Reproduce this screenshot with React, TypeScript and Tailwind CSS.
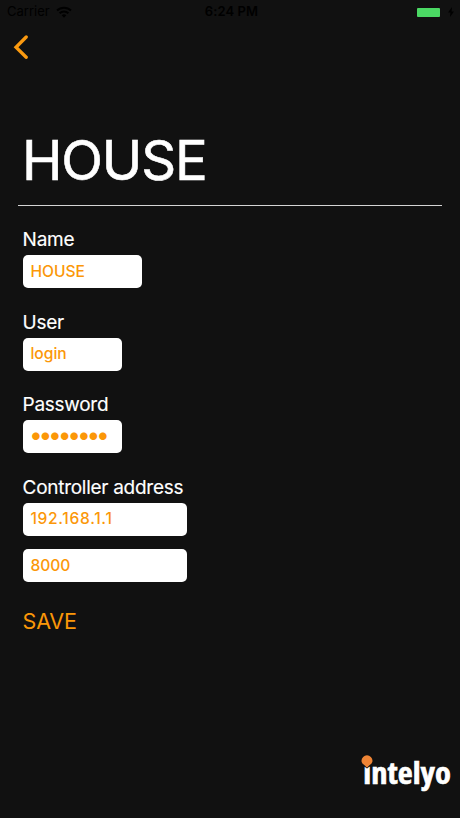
type FieldProps = {
  id: string;
  value: string;
  className: string;
  type?: string;
  label?: string;
};

function Field({ id, value, className, type = "text", label }: FieldProps) {
  return (
    <input
      id={id}
      type={type}
      aria-label={label}
      defaultValue={value}
      className={`block h-[33px] rounded-[5px] bg-white pl-[7.8px] pr-1 font-[550] text-[#fb9708] outline-none ${className}`}
    />
  );
}

function Label({ htmlFor, children }: { htmlFor: string; children: string }) {
  return (
    <label
      htmlFor={htmlFor}
      className="block h-[30px] text-[19px] leading-[30.4px] tracking-[-0.28px] text-white [-webkit-text-stroke:0.15px_white]"
    >
      {children}
    </label>
  );
}

function StatusBar() {
  return (
    <div className="flex h-6 items-center justify-between pl-[7px] pr-1.5 text-[13px] text-black">
      <div className="flex w-[100px] items-center gap-1.5">
        <span>Carrier</span>
        <svg width="16" height="12" viewBox="0 0 16 12" fill="none" stroke="currentColor" strokeWidth="2">
          <path d="M1 4.5a10 10 0 0 1 14 0" />
          <path d="M3.6 7.2a6.3 6.3 0 0 1 8.8 0" />
          <path d="M8 11.8 5.7 9.3a3.3 3.3 0 0 1 4.6 0Z" fill="currentColor" stroke="none" />
        </svg>
      </div>
      <span className="pl-0.5 font-semibold tracking-[0.1px]">6:24 PM</span>
      <div className="flex w-[100px] items-center justify-end gap-2">
        <span className="h-[9px] w-[23px] rounded-[1px] bg-[#4bd964]" />
        <svg width="6" height="10" viewBox="0 0 6 10" fill="currentColor">
          <path d="M4 0 0 5.6h2.4L2 10l4-5.6H3.6Z" />
        </svg>
      </div>
    </div>
  );
}

function Logo() {
  return (
    <svg width="94" height="50" viewBox="0 -4 94 50" className="block overflow-visible">
      <text
        x="2.3"
        y="31"
        textLength="87.6"
        lengthAdjust="spacingAndGlyphs"
        fill="#fff"
        stroke="#fff"
        strokeWidth="0.6"
        fontSize="30"
        fontWeight="700"
        className="font-['Open_Sans',sans-serif] font-stretch-condensed"
      >
        intelyo
      </text>
      <path
        d="M6 2.3a5.5 5.5 0 0 1 5.5 5.5c0 3-2.8 3.8-5.2 6.6h-.6C3.3 11.6.5 10.8.5 7.8A5.5 5.5 0 0 1 6 2.3Z"
        fill="#ee8435"
        stroke="#111111"
        strokeWidth="1.6"
        paintOrder="stroke"
      />
    </svg>
  );
}

export default function App() {
  return (
    <div className="flex h-[818px] w-[460px] flex-col overflow-hidden bg-[#111111] font-['Inter',sans-serif]">
      <StatusBar />

      <button aria-label="Back" className="ml-[13px] mt-[11px] h-6 w-4">
        <svg width="16" height="24" viewBox="0 0 16 24" fill="none" stroke="#fb9a10" strokeWidth="3.3" strokeLinecap="round">
          <path d="M13.2 2 3 12.3l10.2 10" />
        </svg>
      </button>

      <header className="mx-[18px] mt-[66px] h-[81px] border-b border-[#d4d4d4] pl-1">
        <h1 className="text-[54.5px] leading-[71px] tracking-[-1.2px] text-white [-webkit-text-stroke:0.6px_white]">
          HOUSE
        </h1>
      </header>

      <form className="flex flex-col items-start pl-[22.6px] pt-[19px]">
        <div className="mb-[19.6px]">
          <Label htmlFor="name">Name</Label>
          <Field id="name" value="HOUSE" className="w-[119.6px] pb-px text-[15.6px]" />
        </div>
        <div className="mb-[19.6px]">
          <Label htmlFor="user">User</Label>
          <Field id="user" value="login" className="w-[99.5px] pb-px text-[15.6px]" />
        </div>
        <div className="mb-[19.6px]">
          <Label htmlFor="password">Password</Label>
          <Field
            id="password"
            type="password"
            value="password"
            className="w-[99.5px] pb-[3px] indent-[-1px] text-[24px] tracking-[-3.2px]"
          />
        </div>
        <div className="mb-[13.6px]">
          <Label htmlFor="address">Controller address</Label>
          <Field id="address" value="192.168.1.1" className="w-[164px] pb-px text-[15.6px] tracking-[0.68px]" />
        </div>
        <Field id="port" label="Port" value="8000" className="w-[164px] pb-px text-[15.6px]" />
        <button type="button" className="mt-6 text-[21.5px] leading-[30px] tracking-[-0.2px] text-[#fb9708]">
          SAVE
        </button>
      </form>

      <footer className="mb-[19px] ml-auto mr-[5px] mt-auto">
        <Logo />
      </footer>
    </div>
  );
}
